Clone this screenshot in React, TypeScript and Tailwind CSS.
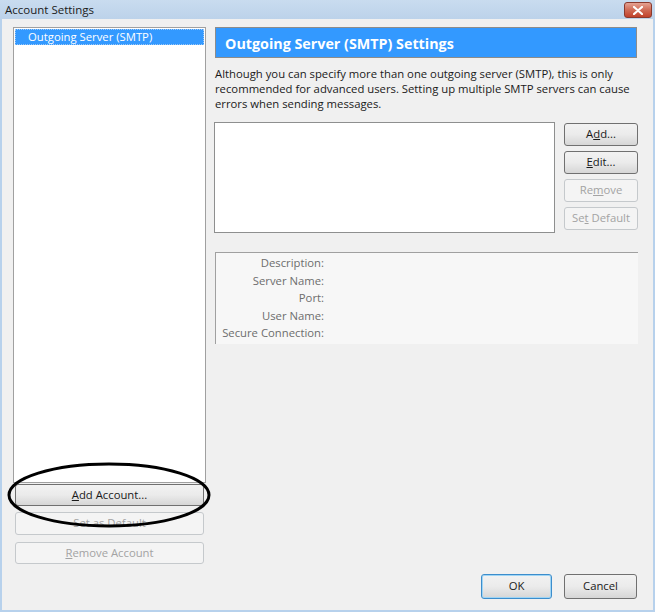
import React from "react";

type BtnProps = {
  children: React.ReactNode;
  disabled?: boolean;
  isDefault?: boolean;
  className?: string;
};

function WinButton({ children, disabled, isDefault, className = "" }: BtnProps) {
  if (disabled) {
    return (
      <div
        className={`flex items-center justify-center rounded-[3px] border border-[#c5c9cc] bg-[#f4f4f4] text-[#a3a3a3] ${className}`}
      >
        {children}
      </div>
    );
  }
  return (
    <div
      className={`flex items-center justify-center rounded-[3px] border ${
        isDefault ? "border-[#3c8dcc] shadow-[inset_0_0_0_1px_#9fd5f5]" : "border-[#707070]"
      } bg-gradient-to-b from-[#f2f2f2] via-[#ebebeb] to-[#d6d6d6] text-[#1a1a1a] ${className}`}
    >
      {children}
    </div>
  );
}

const fields = ["Description:", "Server Name:", "Port:", "User Name:", "Secure Connection:"];

export default function App() {
  return (
    <div
      className="relative flex h-[612px] w-[655px] flex-col overflow-hidden bg-[#f0f0f0] text-[11.3px] text-[#1e1e1e]"
      style={{ fontFamily: '"Open Sans", "Noto Sans", sans-serif' }}
    >
      {/* Title bar */}
      <div className="flex h-[19px] items-center justify-between bg-gradient-to-b from-[#c9dcef] to-[#bcd2ea] pl-[5px] pr-[3px]">
        <span className="text-[11.5px] leading-none text-[#1b1b1b]">Account Settings</span>
        <div className="mt-[1px] flex h-[16px] w-[28px] items-center justify-center rounded-[3px] border border-[#8a3a2e] bg-gradient-to-b from-[#e4a293] via-[#cf6a55] to-[#c1412a]">
          <svg width="10" height="9" viewBox="0 0 10 9">
            <path d="M1 1 L9 8 M9 1 L1 8" stroke="#ffffff" strokeWidth="2.2" strokeLinecap="round" />
          </svg>
        </div>
      </div>

      {/* Body */}
      <div className="flex flex-1 flex-col border-x-[2px] border-b-[2px] border-[#b7d1ec] pl-[11px] pr-[14px] pt-[8px]">
        <div className="flex h-[537px] gap-[8px]">
          {/* Left column */}
          <div className="flex w-[193px] flex-col">
            <div className="flex-1 border border-[#a0a0a0] bg-white p-px">
              <div className="flex h-[16px] items-center bg-[#3399ff] pl-[13px] text-white outline outline-1 -outline-offset-1 outline-dotted outline-[#9cc8f5]">
                Outgoing Server (SMTP)
              </div>
            </div>
            <WinButton className="mx-[2px] mt-px h-[22px]">
              <span>
                <u>A</u>dd Account...
              </span>
            </WinButton>
            <WinButton disabled className="mx-[2px] mt-[6px] h-[23px]">
              Set as Default
            </WinButton>
            <WinButton disabled className="mx-[2px] mt-[7px] h-[22px]">
              <span>
                <u>R</u>emove Account
              </span>
            </WinButton>
          </div>

          {/* Right column */}
          <div className="flex w-[424px] flex-col">
            <div className="ml-px flex h-[31px] w-[422px] items-center border border-[#8c8c8c] bg-[#3399ff] pl-[9px] pt-[3px] text-[14.3px] font-bold text-white">
              Outgoing Server (SMTP) Settings
            </div>
            <p className="ml-px mt-[8px] w-[420px] leading-[15px] text-[#1a1a1a]">
              Although you can specify more than one outgoing server (SMTP), this is only recommended for advanced
              users. Setting up multiple SMTP servers can cause errors when sending messages.
            </p>
            <div className="mt-[11px] flex gap-[9px]">
              <div className="h-[111px] w-[341px] border border-[#8e8f8f] bg-white" />
              <div className="flex w-[74px] flex-col gap-[5px] pt-px">
                <WinButton className="h-[23px]">
                  <span>
                    A<u>d</u>d...
                  </span>
                </WinButton>
                <WinButton className="h-[23px]">
                  <span>
                    <u>E</u>dit...
                  </span>
                </WinButton>
                <WinButton disabled className="h-[23px]">
                  <span>
                    Re<u>m</u>ove
                  </span>
                </WinButton>
                <WinButton disabled className="h-[23px]">
                  <span>
                    Se<u>t</u> Default
                  </span>
                </WinButton>
              </div>
            </div>
            <div className="ml-px mt-[19px] h-[92px] w-[423px] border-l border-t border-l-[#a0a0a0] border-t-[#a0a0a0] bg-[#f7f7f7] pt-[1px]">
              <div className="flex w-[108px] flex-col items-end">
                {fields.map((f) => (
                  <div key={f} className="h-[17.6px] whitespace-nowrap leading-[17.6px] text-[#6d6d6d]">
                    {f}
                  </div>
                ))}
              </div>
            </div>
          </div>
        </div>

        {/* Bottom buttons */}
        <div className="mt-[10px] flex justify-end gap-[12px] pr-[2px]">
          <WinButton isDefault className="h-[25px] w-[71px]">
            OK
          </WinButton>
          <WinButton className="h-[25px] w-[73px]">Cancel</WinButton>
        </div>
      </div>

      {/* Annotation ellipse around Add Account */}
      <svg className="pointer-events-none absolute left-0 top-0" width="655" height="612">
        <ellipse cx="109" cy="495" rx="100" ry="31" fill="none" stroke="#000" strokeWidth="3" />
      </svg>
    </div>
  );
}
